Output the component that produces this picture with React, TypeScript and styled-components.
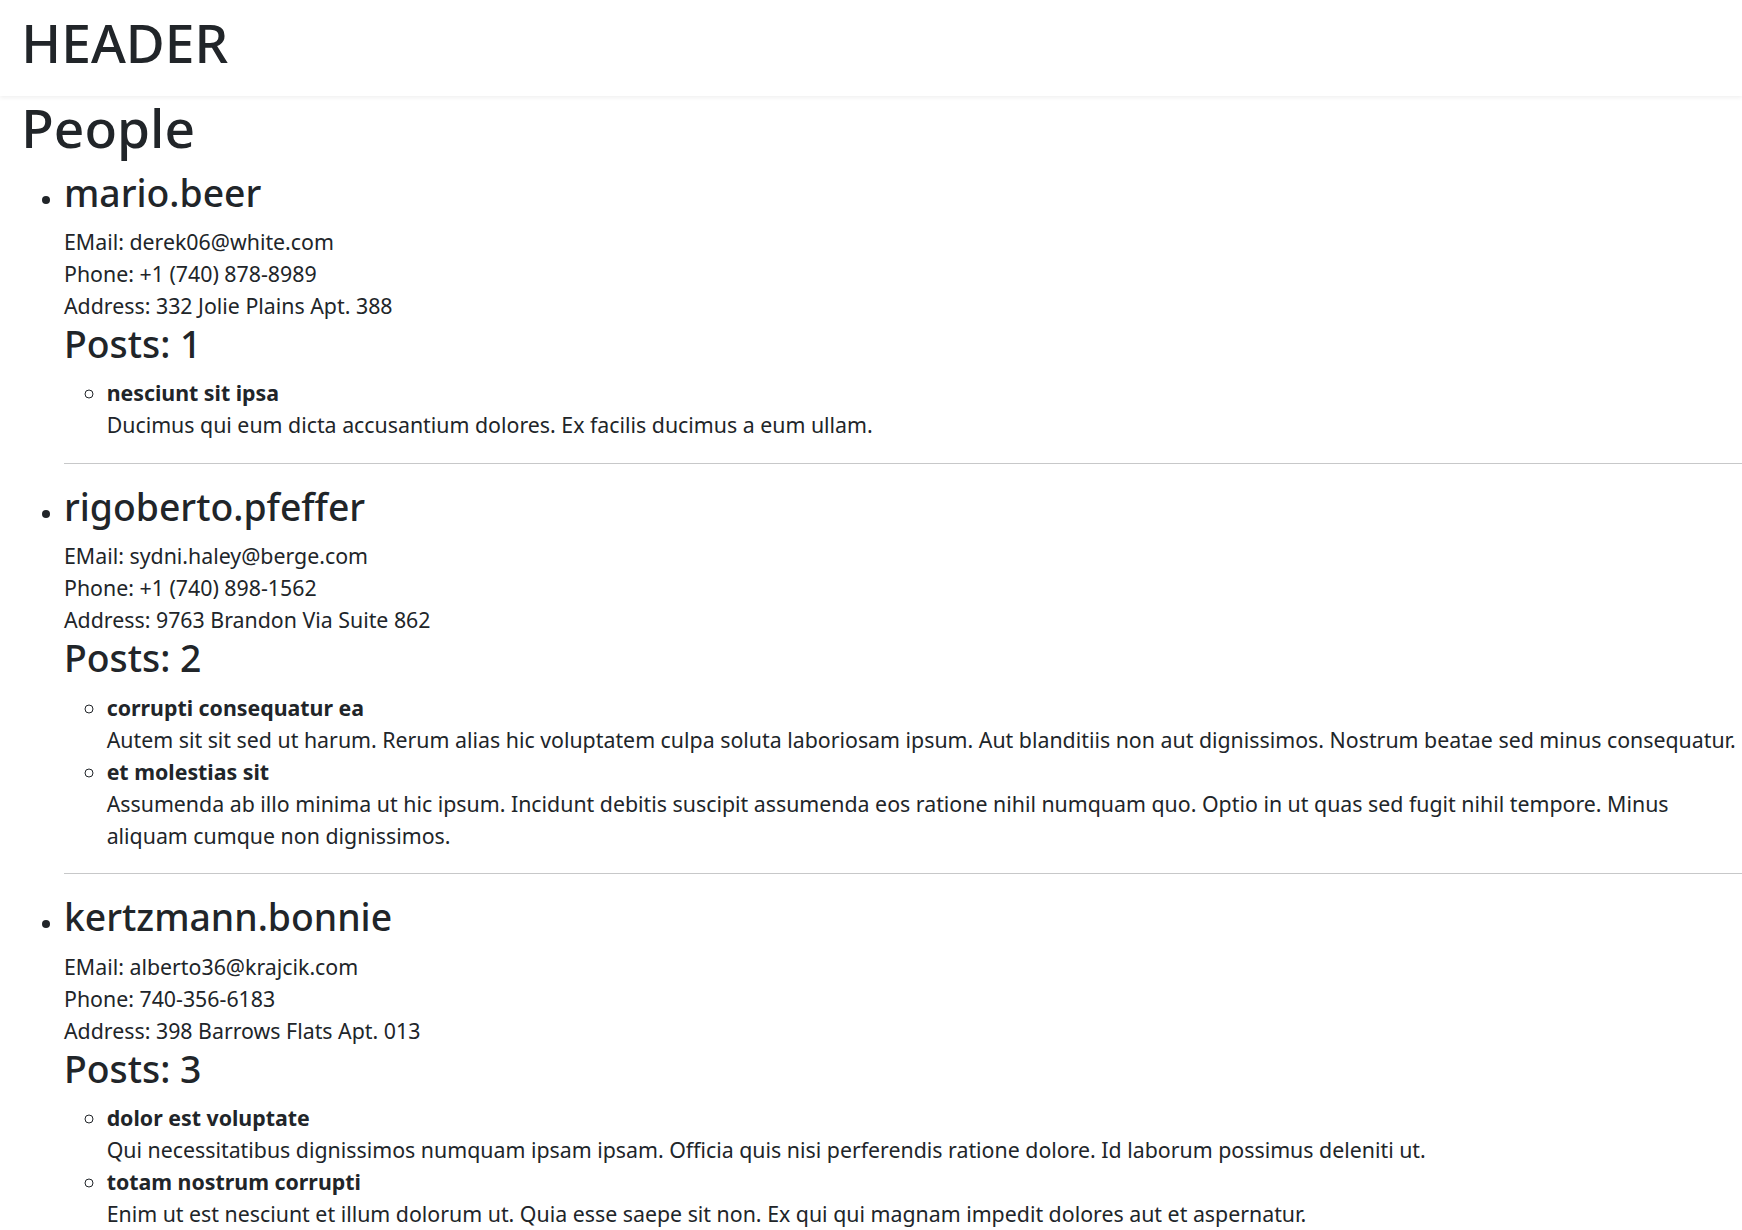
import React from "react";
import styled, { createGlobalStyle } from "styled-components";

const GlobalStyle = createGlobalStyle`
  html { font-size: 21.3333px; }
  *, *::before, *::after { box-sizing: border-box; }
  body {
    margin: 0;
    font-family: "Noto Sans", "DejaVu Sans", sans-serif;
    font-size: 1rem;
    line-height: 1.5;
    color: #212529;
    background: #fff;
  }
`;

const Header = styled.header`
  padding: 0.5rem 1rem;
  background: #fff;
  box-shadow: 0 2px 4px rgba(0, 0, 0, 0.06);
`;

const HeaderTitle = styled.h1`
  margin: 0 0 0.5rem;
  font-size: 2.5rem;
  font-weight: 500;
  line-height: 1.2;
`;

const Main = styled.main`
  padding: 0 0 0 1rem;
`;

const PageTitle = styled.h1`
  margin: 0 0 0.5rem;
  font-size: 2.5rem;
  font-weight: 500;
  line-height: 1.2;
`;

const PeopleList = styled.ul<{ $nested?: boolean }>`
  margin: 0 0 ${(p) => (p.$nested ? "0" : "1rem")};
  padding-left: 2rem;
  list-style-type: ${(p) => (p.$nested ? "circle" : "disc")};
`;

const PersonName = styled.h3`
  margin: 0 0 0.5rem;
  font-size: 1.75rem;
  font-weight: 500;
  line-height: 1.2;
`;

const InfoLine = styled.div``;

const PostsTitle = styled.h3`
  margin: 0 0 0.5rem;
  font-size: 1.75rem;
  font-weight: 500;
  line-height: 1.2;
`;

const PostTitle = styled.div`
  font-weight: 700;
`;

const PostBody = styled.div``;

const Divider = styled.hr`
  margin: 1rem 0;
  border: 0;
  border-top: 1px solid rgba(33, 37, 41, 0.25);
`;

type Post = { title: string; body: string };
type Person = {
  name: string;
  email: string;
  phone: string;
  address: string;
  posts: Post[];
};

const people: Person[] = [
  {
    name: "mario.beer",
    email: "derek06@white.com",
    phone: "+1 (740) 878-8989",
    address: "332 Jolie Plains Apt. 388",
    posts: [
      {
        title: "nesciunt sit ipsa",
        body: "Ducimus qui eum dicta accusantium dolores. Ex facilis ducimus a eum ullam.",
      },
    ],
  },
  {
    name: "rigoberto.pfeffer",
    email: "sydni.haley@berge.com",
    phone: "+1 (740) 898-1562",
    address: "9763 Brandon Via Suite 862",
    posts: [
      {
        title: "corrupti consequatur ea",
        body: "Autem sit sit sed ut harum. Rerum alias hic voluptatem culpa soluta laboriosam ipsum. Aut blanditiis non aut dignissimos. Nostrum beatae sed minus consequatur.",
      },
      {
        title: "et molestias sit",
        body: "Assumenda ab illo minima ut hic ipsum. Incidunt debitis suscipit assumenda eos ratione nihil numquam quo. Optio in ut quas sed fugit nihil tempore. Minus aliquam cumque non dignissimos.",
      },
    ],
  },
  {
    name: "kertzmann.bonnie",
    email: "alberto36@krajcik.com",
    phone: "740-356-6183",
    address: "398 Barrows Flats Apt. 013",
    posts: [
      {
        title: "dolor est voluptate",
        body: "Qui necessitatibus dignissimos numquam ipsam ipsam. Officia quis nisi perferendis ratione dolore. Id laborum possimus deleniti ut.",
      },
      {
        title: "totam nostrum corrupti",
        body: "Enim ut est nesciunt et illum dolorum ut. Quia esse saepe sit non. Ex qui qui magnam impedit dolores aut et aspernatur.",
      },
      {
        title: "quia rerum ut",
        body: "Voluptas aut dolorem et est. Sed voluptatem nemo sit quia. Et ut vel est quo ut.",
      },
    ],
  },
];

export default function App() {
  return (
    <>
      <GlobalStyle />
      <Header>
        <HeaderTitle>HEADER</HeaderTitle>
      </Header>
      <Main>
        <PageTitle>People</PageTitle>
        <PeopleList>
          {people.map((person, i) => (
            <li key={person.name}>
              <PersonName>{person.name}</PersonName>
              <InfoLine>EMail: {person.email}</InfoLine>
              <InfoLine>Phone: {person.phone}</InfoLine>
              <InfoLine>Address: {person.address}</InfoLine>
              <PostsTitle>Posts: {person.posts.length}</PostsTitle>
              <PeopleList $nested>
                {person.posts.map((post) => (
                  <li key={post.title}>
                    <PostTitle>{post.title}</PostTitle>
                    <PostBody>{post.body}</PostBody>
                  </li>
                ))}
              </PeopleList>
              {i < people.length - 1 && <Divider />}
            </li>
          ))}
        </PeopleList>
      </Main>
    </>
  );
}
